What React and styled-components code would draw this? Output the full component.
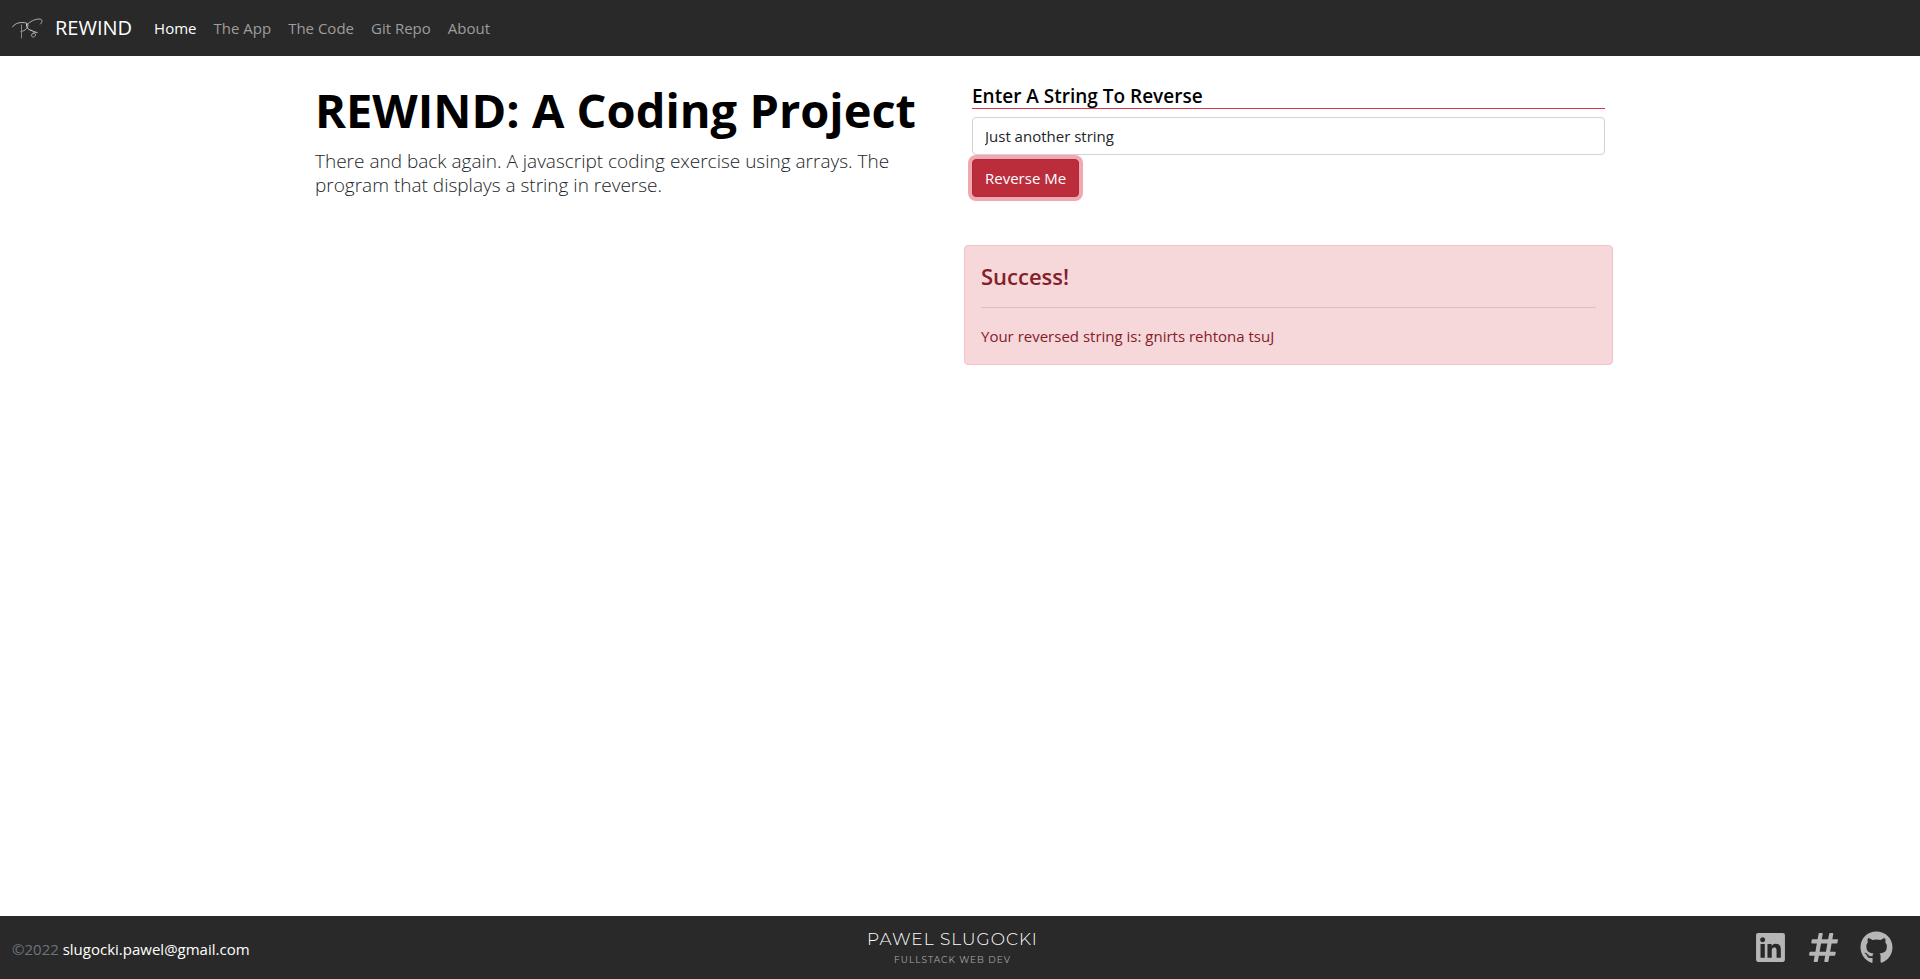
import React, { useState } from "react";
import styled, { createGlobalStyle } from "styled-components";
import { FaLinkedin, FaHashtag, FaGithub } from "react-icons/fa";

const GlobalStyle = createGlobalStyle`
  *, *::before, *::after { box-sizing: border-box; }
  body {
    margin: 0;
    font-family: "Segoe UI", "Open Sans", "Noto Sans", sans-serif;
    font-size: 15px;
    line-height: 24px;
    color: #212529;
    background: #fff;
  }
  h1, h2, h3, p { margin: 0; }
`;

const Page = styled.div`
  min-height: 100vh;
  display: flex;
  flex-direction: column;
`;

const Navbar = styled.nav`
  display: flex;
  align-items: center;
  height: 56px;
  padding: 0 12px;
  background: #292929;
`;

const Brand = styled.a`
  display: flex;
  align-items: center;
  gap: 11px;
  margin-right: 14px;
  font-size: 20px;
  line-height: 30px;
  color: #fff;
  text-decoration: none;
`;

const Signature = styled.svg`
  width: 32px;
  height: 24px;
  margin-top: 4px;
  fill: none;
  stroke-linecap: round;
`;

const NavList = styled.ul`
  display: flex;
  gap: 1px;
  margin: 0;
  padding: 0;
  list-style: none;
`;

const NavLink = styled.a`
  display: block;
  padding: 8px;
  color: ${({ $active }) => ($active ? "#fff" : "#9d9d9d")};
  text-decoration: none;
`;

const Main = styled.main`
  flex: 1;
  display: grid;
  grid-template-columns: 1fr 1fr;
  align-items: start;
  width: 100%;
  max-width: 1322px;
  margin: 0 auto;
  padding: 25px 8px 24px 16px;
`;

const Intro = styled.section`
  min-width: 0;
  padding-right: 24px;
`;

const Title = styled.h1`
  margin-bottom: 10px;
  font-size: 47px;
  line-height: 58px;
  font-weight: 700;
  color: #000;
`;

const Lead = styled.p`
  font-size: 19px;
  line-height: 24px;
  font-weight: 300;
`;

const Tool = styled.section`
  min-width: 0;
`;

const Form = styled.form`
  display: flex;
  flex-direction: column;
  align-items: flex-start;
  padding: 4px 8px 0;
`;

const FieldLabel = styled.label`
  width: 100%;
  margin-bottom: 8px;
  border-bottom: 1px solid #dc3545;
  font-size: 19px;
  line-height: 23px;
  font-weight: 600;
  color: #000;
`;

const TextInput = styled.input`
  width: 100%;
  height: 38px;
  margin-bottom: 4px;
  padding: 6px 12px;
  border: 1px solid #ced4da;
  border-radius: 4px;
  font: inherit;
  color: #212529;
  background: #fff;
  outline: none;
`;

const SubmitButton = styled.button`
  height: 38px;
  padding: 6px 12px;
  border: 1px solid #b02a37;
  border-radius: 4px;
  font: inherit;
  color: #fff;
  background: #bb2d3b;
  box-shadow: 0 0 0 4px rgba(225, 83, 97, 0.5);
  cursor: pointer;
`;

const Alert = styled.div`
  margin-top: 48px;
  padding: 16px;
  border: 1px solid #f5c2c7;
  border-radius: 4px;
  color: #842029;
  background: #f6d7da;
`;

const AlertTitle = styled.h2`
  font-size: 22px;
  line-height: 29px;
  font-weight: 600;
`;

const Divider = styled.hr`
  height: 1px;
  margin: 16px 0;
  border: 0;
  background: currentColor;
  opacity: 0.25;
`;

const Footer = styled.footer`
  display: grid;
  grid-template-columns: 1fr auto 1fr;
  align-items: center;
  height: 63px;
  padding: 0 27px 0 12px;
  background: #292929;
`;

const Copyright = styled.p`
  padding-top: 2px;
  color: #6c757d;
`;

const MailLink = styled.a`
  color: #fff;
  text-decoration: none;
`;

const Signoff = styled.div`
  font-family: Montserrat, Lato, sans-serif;
  text-align: center;
`;

const SignoffName = styled.p`
  font-size: 17px;
  line-height: 24px;
  font-weight: 300;
  letter-spacing: 1px;
  color: #fff;
`;

const SignoffRole = styled.p`
  font-size: 9px;
  line-height: 18px;
  letter-spacing: 1px;
  color: #a6a6a6;
`;

const Social = styled.div`
  display: flex;
  justify-content: flex-end;
  align-items: center;
  gap: 20px;
`;

const SocialLink = styled.a`
  display: flex;
  font-size: 33px;
  color: #b6b6b6;
`;

const links = ["Home", "The App", "The Code", "Git Repo", "About"];

export default function App() {
  const [text, setText] = useState("Just another string");
  const [reversed, setReversed] = useState("gnirts rehtona tsuJ");

  const handleSubmit = (event) => {
    event.preventDefault();
    setReversed(Array.from(text).reverse().join(""));
  };

  return (
    <Page>
      <GlobalStyle />
      <Navbar>
        <Brand href="#home">
          <Signature viewBox="0 0 32 24" aria-hidden="true">
            <path d="M0.5 9C2 6 6 4.5 10 4.5C13 4.5 16 5 16 7C16 10 13 13 9 13.5" stroke="#b0b0b0" />
            <path d="M9.500 7V20" stroke="#8a8a8a" />
            <path d="M14.500 7C18 3.500 23 1 27 1C31 1 30.500 4 28.500 6" stroke="#b0b0b0" />
            <path d="M14.500 6C14.500 10 16 11 18 12C21 13 22 14 25 14.500" stroke="#d8d8d8" />
            <path d="M25 14.500C21 14 19 16 19.500 18C20.500 20 24 19 23.500 16C23 15 21 15 20 16.500" stroke="#a0a0a0" />
          </Signature>
          REWIND
        </Brand>
        <NavList>
          {links.map((label, i) => (
            <li key={label}>
              <NavLink href="#" $active={i === 0}>{label}</NavLink>
            </li>
          ))}
        </NavList>
      </Navbar>

      <Main>
        <Intro>
          <Title>REWIND: A Coding Project</Title>
          <Lead>
            There and back again. A javascript coding exercise using arrays. The
            program that displays a string in reverse.
          </Lead>
        </Intro>
        <Tool>
          <Form onSubmit={handleSubmit}>
            <FieldLabel htmlFor="userString">Enter A String To Reverse</FieldLabel>
            <TextInput
              id="userString"
              type="text"
              value={text}
              onChange={(event) => setText(event.target.value)}
            />
            <SubmitButton type="submit">Reverse Me</SubmitButton>
          </Form>
          <Alert role="alert">
            <AlertTitle>Success!</AlertTitle>
            <Divider />
            <p>Your reversed string is: {reversed}</p>
          </Alert>
        </Tool>
      </Main>

      <Footer>
        <Copyright>
          ©2022 <MailLink href="mailto:slugocki.pawel@gmail.com">slugocki.pawel@gmail.com</MailLink>
        </Copyright>
        <Signoff>
          <SignoffName>PAWEL SLUGOCKI</SignoffName>
          <SignoffRole>FULLSTACK WEB DEV</SignoffRole>
        </Signoff>
        <Social>
          <SocialLink href="#linkedin" aria-label="LinkedIn"><FaLinkedin /></SocialLink>
          <SocialLink href="#blog" aria-label="Blog"><FaHashtag /></SocialLink>
          <SocialLink href="#github" aria-label="GitHub"><FaGithub /></SocialLink>
        </Social>
      </Footer>
    </Page>
  );
}
